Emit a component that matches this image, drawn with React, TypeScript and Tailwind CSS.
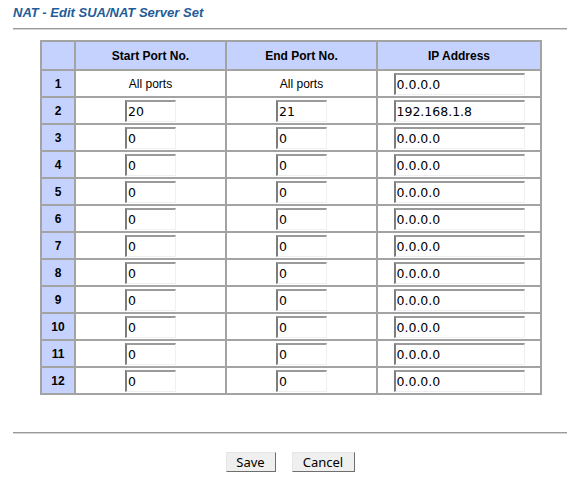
import React from 'react'

type Row = { start: string; end: string; ip: string; all?: boolean }

const rows: Row[] = [
  { start: 'All ports', end: 'All ports', ip: '0.0.0.0', all: true },
  { start: '20', end: '21', ip: '192.168.1.8' },
  ...Array.from({ length: 10 }, () => ({ start: '0', end: '0', ip: '0.0.0.0' })),
]

const Field = ({ value, wide }: { value: string; wide?: boolean }): JSX.Element => (
  <input
    readOnly
    value={value}
    className={`${wide ? 'w-[131px]' : 'w-[51px]'} h-[22px] border-t-2 border-l-2 border-r border-b border-t-[#9a9a9a] border-l-[#7d7d7d] border-r-[#f0f0f0] border-b-[#f0f0f0] bg-white pl-[1px] align-middle text-[12.5px] text-black outline-none [font-family:'DejaVu_Sans',sans-serif]`}
  />
)

const App = (): JSX.Element => {
  return (
    <div className="min-h-[482px] w-[580px] bg-white px-[13px] [font-family:'Liberation_Sans',Arial,sans-serif]">
      <div className="pt-[5px] text-[13px] font-bold italic leading-[16px] text-[#1f5c98]">
        NAT - Edit SUA/NAT Server Set
      </div>
      <div className="mt-[7px] h-[2px] border-t border-b border-t-[#9b9b9b] border-b-[#d4d4d4]" />

      <div className="pl-[27px] pt-[10px]">
        <table className="w-[502px] table-fixed border-separate border-spacing-0 border border-[#a3a3a3] text-[12px] text-black">
          <thead>
            <tr className="h-[29px] bg-[#c6d2fe]">
              <th className="w-[34px] border border-[#a3a3a3]"></th>
              <th className="w-[151px] border border-[#a3a3a3] font-bold">Start Port No.</th>
              <th className="w-[151px] border border-[#a3a3a3] font-bold">End Port No.</th>
              <th className="w-[164px] border border-[#a3a3a3] font-bold">IP Address</th>
            </tr>
          </thead>
          <tbody>
            {rows.map((r, i) => (
              <tr key={i} className="h-[27px]">
                <td className="border border-[#a3a3a3] bg-[#c6d2fe] text-center font-bold">{i + 1}</td>
                <td className="border border-[#a3a3a3] text-center">
                  {r.all ? r.start : <Field value={r.start} />}
                </td>
                <td className="border border-[#a3a3a3] text-center">
                  {r.all ? r.end : <Field value={r.end} />}
                </td>
                <td className="border border-[#a3a3a3] text-center">
                  <Field value={r.ip} wide />
                </td>
              </tr>
            ))}
          </tbody>
        </table>
      </div>

      <div className="mt-[37px] h-[2px] border-t border-b border-t-[#9b9b9b] border-b-[#d4d4d4]" />

      <div className="flex justify-center gap-[16px] pt-[18px] [font-family:'Noto_Sans',sans-serif]">
        <button className="h-[20px] w-[50px] border border-t-[#e6e6e6] border-l-[#e6e6e6] border-r-[#6e6e6e] border-b-[#6e6e6e] bg-[#efefef] text-[13px] leading-[18px] text-black">
          Save
        </button>
        <button className="h-[20px] w-[63px] border border-t-[#e6e6e6] border-l-[#e6e6e6] border-r-[#6e6e6e] border-b-[#6e6e6e] bg-[#efefef] text-[13px] leading-[18px] text-black">
          Cancel
        </button>
      </div>
    </div>
  )
}

export default App
